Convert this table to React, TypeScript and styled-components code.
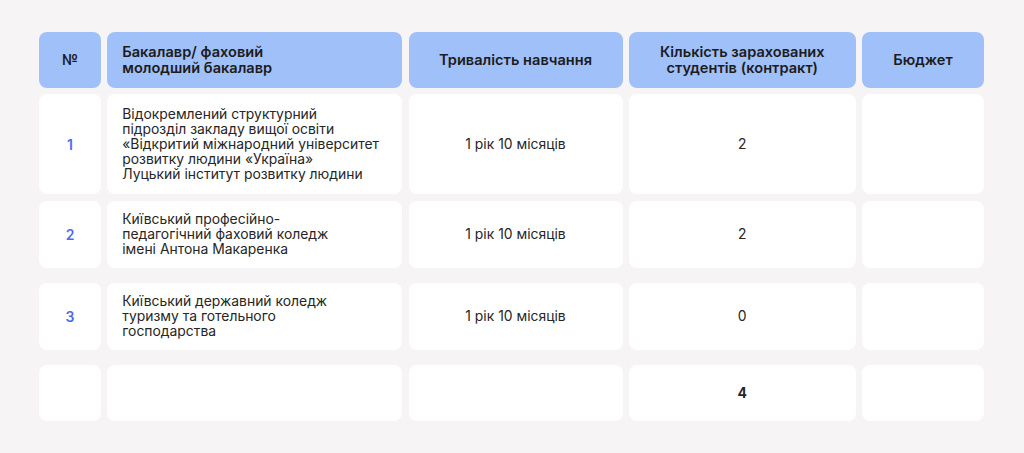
import React from "react";
import styled, { createGlobalStyle } from "styled-components";

const Global = createGlobalStyle`
  html, body { margin: 0; padding: 0; background: #f6f4f4; }
  body { font-family: Inter, "Noto Sans", sans-serif; color: #1f1f1f; }
`;

const Page = styled.div`
  width: 1024px;
  height: 453px;
  box-sizing: border-box;
  padding: 32px 0 0 39px;
  background: #f6f4f4;
`;

const Table = styled.div`
  display: flex;
  flex-direction: column;
  width: 945px;
`;

const Row = styled.div<{ $h: number; $mt: number }>`
  display: grid;
  grid-template-columns: 62px 295px 214px 227px 122px;
  column-gap: 6.25px;
  height: ${(p) => p.$h}px;
  margin-top: ${(p) => p.$mt}px;
`;

const HeadCell = styled.div<{ $left?: boolean }>`
  background: #a0c0fa;
  border-radius: 8px;
  display: flex;
  align-items: center;
  justify-content: ${(p) => (p.$left ? "flex-start" : "center")};
  text-align: ${(p) => (p.$left ? "left" : "center")};
  padding: ${(p) => (p.$left ? "0 15px" : "0 8px")};
  font-size: 14.6px;
  font-weight: 600;
  line-height: 16px;
  color: #1c1c1c;
`;

const Cell = styled.div<{ $left?: boolean; $bold?: boolean }>`
  background: #ffffff;
  border-radius: 8px;
  display: flex;
  align-items: center;
  justify-content: ${(p) => (p.$left ? "flex-start" : "center")};
  text-align: ${(p) => (p.$left ? "left" : "center")};
  padding: ${(p) => (p.$left ? "0 15px" : "0 8px")};
  font-size: 13.9px;
  line-height: 15px;
  font-weight: ${(p) => (p.$bold ? 700 : 400)};
  color: #262626;
`;

const NumCell = styled(Cell)`
  color: #4a6cf0;
  font-weight: 600;
  font-size: 14px;
`;

const rows = [
  {
    n: "1",
    name: [
      "Відокремлений структурний",
      "підрозділ закладу вищої освіти",
      "«Відкритий міжнародний університет",
      "розвитку людини «Україна»",
      "Луцький інститут розвитку людини",
    ],
    dur: "1 рік 10 місяців",
    count: "2",
    h: 100,
    mt: 6,
  },
  {
    n: "2",
    name: ["Київський професійно-", "педагогічний фаховий коледж", "імені Антона Макаренка"],
    dur: "1 рік 10 місяців",
    count: "2",
    h: 67,
    mt: 7,
  },
  {
    n: "3",
    name: ["Київський державний коледж", "туризму та готельного", "господарства"],
    dur: "1 рік 10 місяців",
    count: "0",
    h: 67,
    mt: 15,
  },
];

export default function App() {
  return (
    <>
      <Global />
      <Page>
        <Table>
          <Row $h={56} $mt={0}>
            <HeadCell>№</HeadCell>
            <HeadCell $left>
              Бакалавр/ фаховий
              <br />
              молодший бакалавр
            </HeadCell>
            <HeadCell>Тривалість навчання</HeadCell>
            <HeadCell>
              Кількість зарахованих
              <br />
              студентів (контракт)
            </HeadCell>
            <HeadCell>Бюджет</HeadCell>
          </Row>
          {rows.map((r) => (
            <Row key={r.n} $h={r.h} $mt={r.mt}>
              <NumCell>{r.n}</NumCell>
              <Cell $left>
                <div>
                  {r.name.map((l, i) => (
                    <React.Fragment key={i}>
                      {l}
                      {i < r.name.length - 1 && <br />}
                    </React.Fragment>
                  ))}
                </div>
              </Cell>
              <Cell>{r.dur}</Cell>
              <Cell>{r.count}</Cell>
              <Cell />
            </Row>
          ))}
          <Row $h={56} $mt={15}>
            <Cell />
            <Cell />
            <Cell />
            <Cell $bold>4</Cell>
            <Cell />
          </Row>
        </Table>
      </Page>
    </>
  );
}
